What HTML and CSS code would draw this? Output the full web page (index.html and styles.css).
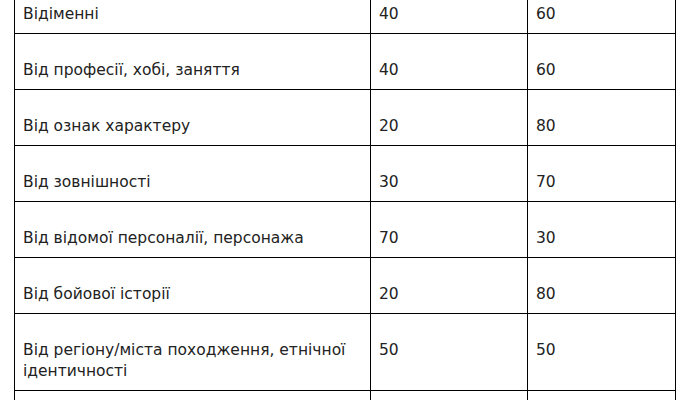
FILE: index.html
```html
<!DOCTYPE html>
<html lang="uk">
<head>
<meta charset="utf-8">
<link rel="stylesheet" href="styles.css">
</head>
<body>
<table class="stats">
  <colgroup>
    <col class="c-name">
    <col class="c-a">
    <col class="c-b">
  </colgroup>
  <tbody>
    <tr><td>Відіменні</td><td>40</td><td>60</td></tr>
    <tr><td>Від професії, хобі, заняття</td><td>40</td><td>60</td></tr>
    <tr><td>Від ознак характеру</td><td>20</td><td>80</td></tr>
    <tr><td>Від зовнішності</td><td>30</td><td>70</td></tr>
    <tr><td>Від відомої персоналії, персонажа</td><td>70</td><td>30</td></tr>
    <tr><td>Від бойової історії</td><td>20</td><td>80</td></tr>
    <tr><td>Від регіону/міста походження, етнічної ідентичності</td><td>50</td><td>50</td></tr>
    <tr><td>&nbsp;</td><td>&nbsp;</td><td>&nbsp;</td></tr>
  </tbody>
</table>
</body>
</html>
```

FILE: styles.css
```css
html, body {
  margin: 0;
  padding: 0;
  background: #ffffff;
}
body {
  overflow: hidden;
}
.stats {
  margin: -23px 0 0 14px;
  border-collapse: collapse;
  table-layout: fixed;
  width: 662px;
  font-family: "DejaVu Sans", Verdana, sans-serif;
  font-size: 15.5px;
  line-height: 21px;
  color: #222222;
}
.c-name { width: 356px; }
.c-a { width: 157px; }
.c-b { width: 148px; }
.stats td {
  border: 1px solid #000000;
  padding: 26px 8px 8px 8px;
  vertical-align: top;
  text-align: left;
}
```
